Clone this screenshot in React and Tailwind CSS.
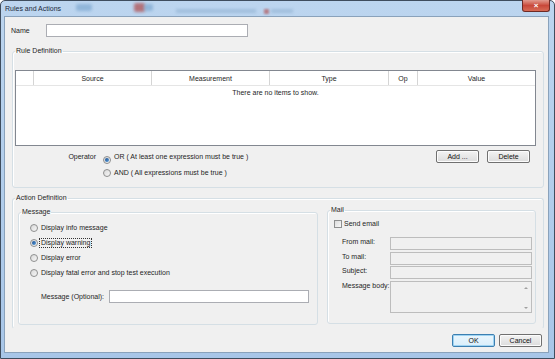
import React from "react";

const font = { fontFamily: '"Liberation Sans", Arial, sans-serif' };

function Radio({ checked }) {
  return (
    <span className="relative inline-flex h-[8px] w-[8px] shrink-0 items-center justify-center rounded-full border border-[#8e8f8f] bg-gradient-to-br from-[#d9d9d9] to-[#f7f7f7]">
      {checked && (
        <span className="h-[4px] w-[4px] rounded-full bg-gradient-to-br from-[#1a4d8c] to-[#5aa0e0]" />
      )}
    </span>
  );
}

function Button({ children, primary }) {
  return (
    <div
      className={
        "flex h-[13px] w-[43px] items-center justify-center rounded-[2px] border text-[7px] leading-none text-[#111] " +
        (primary
          ? "border-[#3c7fb1] bg-gradient-to-b from-[#eaf6fd] to-[#d9eefb] shadow-[inset_0_0_0_1px_#9ed3f2]"
          : "border-[#707070] bg-gradient-to-b from-[#f3f3f3] to-[#dcdcdc] shadow-[inset_0_0_0_1px_#fcfcfc]")
      }
    >
      {children}
    </div>
  );
}

function Group({ label, className, children }) {
  return (
    <fieldset
      className={
        "rounded-[3px] border border-[#d5dfe5] shadow-[inset_1px_1px_0_#fff] " +
        className
      }
    >
      <legend className="ml-[2px] px-[1px] text-[7px] leading-[8px] text-[#1e1e1e]">
        {label}
      </legend>
      {children}
    </fieldset>
  );
}

function MailField({ label, h = "h-[13px]", mt, body }) {
  return (
    <div className={"flex items-start pl-[14px] " + mt}>
      <div className="w-[48px] pt-[1px] text-[7px] leading-[8px] text-[#1e1e1e]">
        {label}
      </div>
      <div
        className={
          "relative w-[142px] border border-[#bdbdbd] bg-[#f0f0f0] " + h
        }
      >
        {body && (
          <div className="absolute right-[3px] top-[5px] flex h-[22px] flex-col justify-between">
            <span className="h-0 w-0 border-x-[2px] border-b-[2px] border-x-transparent border-b-[#a0a0a0]" />
            <span className="h-0 w-0 border-x-[2px] border-t-[2px] border-x-transparent border-t-[#a0a0a0]" />
          </div>
        )}
      </div>
    </div>
  );
}

export default function App() {
  const cols = ["", "Source", "Measurement", "Type", "Op", "Value"];
  return (
    <div
      style={font}
      className="flex h-[359px] w-[555px] flex-col rounded-t-[5px] border border-[#3f4d5e] bg-gradient-to-b from-[#bcd5ef] to-[#a8c6e8] pb-[5px] pl-[3px] pr-[5px]"
    >
      {/* title bar */}
      <div className="relative h-[15px] shrink-0">
        <div className="absolute left-[72px] top-[3px] h-[7px] w-[16px] rounded-[2px] bg-[#7fa9d1] opacity-70 blur-[1.5px]" />
        <div className="absolute left-[130px] top-[2px] h-[9px] w-[11px] rounded-[2px] bg-[#b25a5e] opacity-80 blur-[1.5px]" />
        <div className="absolute left-[140px] top-[3px] h-[7px] w-[9px] rounded-[2px] bg-[#7fa9d1] opacity-70 blur-[1.5px]" />
        <div className="absolute left-[172px] top-[8px] h-[4px] w-[80px] bg-[#8fb0d0] opacity-60 blur-[1.5px]" />
        <div className="absolute left-[260px] top-[8px] h-[5px] w-[5px] bg-[#b25a5e] opacity-70 blur-[1px]" />
        <div className="absolute left-[267px] top-[8px] h-[4px] w-[22px] bg-[#8fb0d0] opacity-60 blur-[1.5px]" />
        <div className="absolute left-[1px] top-[4px] text-[7px] leading-[8px] text-[#1b2a3c]">
          Rules and Actions
        </div>
        <div className="absolute -top-px right-[-1px] flex h-[12px] w-[28px] items-center justify-center rounded-b-[3px] border border-t-0 border-[#6e2a25] bg-gradient-to-b from-[#e19a8f] via-[#c8483a] to-[#d76a55] text-[8px] font-bold leading-none text-white">
          ×
        </div>
      </div>

      {/* content */}
      <div className="flex-1 border border-[#8aa2bb] bg-[#f0f0f0] text-[#1e1e1e]">
        {/* name */}
        <div className="mt-[7px] flex items-center">
          <div className="w-[41px] pl-[6px] text-[7px] leading-none">Name</div>
          <div className="h-[13px] w-[202px] border border-[#abadb3] bg-white" />
        </div>

        {/* rule definition */}
        <Group label="Rule Definition" className="ml-[7px] mt-[10px] h-[141px] w-[532px]">
          <div className="ml-[2px] mt-[15px] h-[76px] w-[521px] border border-[#828790] bg-white">
            <div className="grid h-[15px] grid-cols-[18px_118px_118px_119px_29px_1fr] border-b border-[#e5e5e5]">
              {cols.map((c, i) => (
                <div
                  key={i}
                  className={
                    "flex items-center justify-center text-[7px] leading-none " +
                    (i < cols.length - 1 ? "border-r border-[#d5d5d5]" : "")
                  }
                >
                  {c}
                </div>
              ))}
            </div>
            <div className="pt-[3px] text-center text-[7px] leading-[8px]">
              There are no items to show.
            </div>
          </div>

          <div className="mt-[4px] flex h-[13px] items-center">
            <div className="w-[83px] text-right text-[7px] leading-none">Operator</div>
            <div className="ml-[7px]">
              <Radio checked />
            </div>
            <div className="ml-[3px] text-[7px] leading-none">
              OR ( At least one expression must be true )
            </div>
            <div className="ml-auto mr-[13px] flex gap-[8px]">
              <Button>Add ...</Button>
              <Button>Delete</Button>
            </div>
          </div>
          <div className="mt-[4px] flex h-[11px] items-center pl-[90px]">
            <Radio />
            <div className="ml-[3px] text-[7px] leading-none">
              AND ( All expressions must be true )
            </div>
          </div>
        </Group>

        {/* action definition */}
        <Group
          label="Action Definition"
          className="ml-[7px] mt-[6px] h-[135px] w-[532px] border-b-[#f0f0f0]"
        >
          <div className="ml-[5px] flex items-start">
            <Group label="Message" className="mt-[6px] h-[117px] w-[300px]">
              <div className="mt-[7px] flex flex-col gap-[5px] pl-[11px]">
                {[
                  "Display info message",
                  "Display warning",
                  "Display error",
                  "Display fatal error and stop test execution",
                ].map((t, i) => (
                  <div key={t} className="flex h-[10px] items-center">
                    <Radio checked={i === 1} />
                    <span
                      className={
                        "ml-[2px] px-[1px] text-[7px] leading-[8px] " +
                        (i === 1 ? "outline outline-1 outline-dotted outline-[#333]" : "")
                      }
                    >
                      {t}
                    </span>
                  </div>
                ))}
              </div>
              <div className="mt-[12px] flex items-center">
                <div className="w-[90px] pl-[22px] text-[7px] leading-none">
                  Message (Optional):
                </div>
                <div className="h-[13px] w-[200px] border border-[#abadb3] bg-white" />
              </div>
            </Group>

            <Group label="Mail" className="ml-[9px] mt-[4px] h-[118px] w-[209px]">
              <div className="mt-[5px] flex h-[9px] items-center pl-[6px]">
                <span className="h-[8px] w-[8px] border border-[#8e8f8f] bg-gradient-to-br from-[#dcdcdc] to-[#f8f8f8]" />
                <span className="ml-[2px] text-[7px] leading-none">Send email</span>
              </div>
              <MailField label="From mail:" mt="mt-[9px]" />
              <MailField label="To mail:" mt="mt-[2px]" />
              <MailField label="Subject:" mt="mt-[1px]" />
              <MailField label="Message body:" mt="mt-[2px]" h="h-[32px]" body />
            </Group>
          </div>
        </Group>

        {/* footer */}
        <div className="mt-[5px] flex justify-end gap-[4px] pr-[6px]">
          <Button primary>OK</Button>
          <Button>Cancel</Button>
        </div>
      </div>
    </div>
  );
}
